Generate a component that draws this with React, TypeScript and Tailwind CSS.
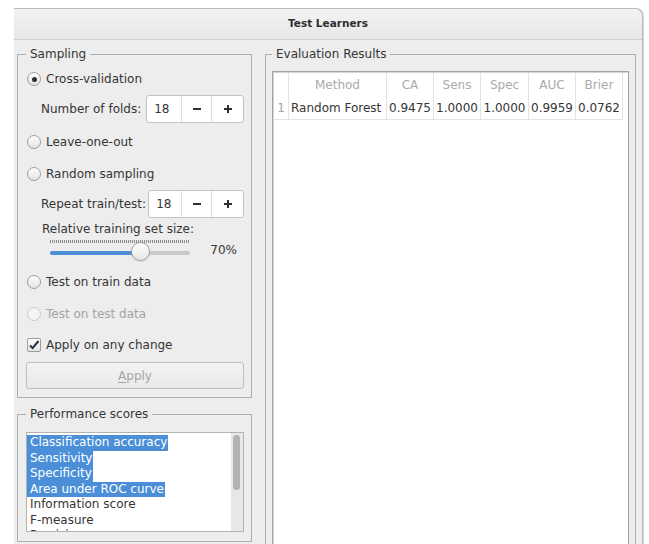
import type { ReactNode } from 'react'

// Orange-style "Test Learners" widget: sampling options on the left, results table on the right.

const SCORES: [string, boolean][] = [
  ['Classification accuracy', true],
  ['Sensitivity', true],
  ['Specificity', true],
  ['Area under ROC curve', true],
  ['Information score', false],
  ['F-measure', false],
  ['Precision', false],
]

const HEADERS = ['', 'Method', 'CA', 'Sens', 'Spec', 'AUC', 'Brier']
const ROW = ['1', 'Random Forest', '0.9475', '1.0000', '1.0000', '0.9959', '0.0762']

function Radio({ checked, disabled }: { checked?: boolean; disabled?: boolean }) {
  return (
    <span
      className={`flex h-[14px] w-[14px] shrink-0 items-center justify-center rounded-full border ${
        disabled ? 'border-[#cacaca] bg-[#f4f4f4]' : 'border-[#9d9d9d] bg-gradient-to-b from-white to-[#e3e3e3]'
      }`}
    >
      {checked && <span className="h-[5px] w-[5px] rounded-full bg-[#2e2e2e]" />}
    </span>
  )
}

function RadioRow({ label, h, checked, disabled }: { label: string; h: string; checked?: boolean; disabled?: boolean }) {
  return (
    <div className={`flex ${h} items-center gap-[5px] pl-[1px] ${disabled ? 'text-[#a4a4a4]' : ''}`}>
      <Radio checked={checked} disabled={disabled} />
      <span>{label}</span>
    </div>
  )
}

function Spin({ value, gap }: { value: number; gap: string }) {
  return (
    <div className={`${gap} flex h-[28px] flex-1 overflow-hidden rounded-[3px] border border-[#c2c2c2] bg-white`}>
      <span className="flex flex-1 items-center pl-[7px]">{value}</span>
      <span className="flex w-[30px] items-center justify-center border-l border-[#dcdcdc]">
        <svg width="10" height="10" viewBox="0 0 10 10">
          <path d="M1 5h8" stroke="#2e2e2e" strokeWidth="2" />
        </svg>
      </span>
      <span className="flex w-[32px] items-center justify-center border-l border-[#dcdcdc]">
        <svg width="10" height="10" viewBox="0 0 10 10">
          <path d="M1 5h8M5 1v8" stroke="#2e2e2e" strokeWidth="2" />
        </svg>
      </span>
    </div>
  )
}

function Group({ title, className, children }: { title: string; className: string; children: ReactNode }) {
  return (
    <fieldset className={`border border-[#adadad] ${className}`}>
      <legend className="pl-[4px] pr-[4px] leading-[14px]">{title}</legend>
      {children}
    </fieldset>
  )
}

export default function App() {
  return (
    <div className="h-[544px] w-[649px] overflow-hidden bg-white pl-[14px] pt-[8px] font-['DejaVu_Sans',sans-serif] text-[12px] text-[#353535]">
      <div className="h-[560px] w-[629px] rounded-tr-[8px] border-r border-t border-[#b9b9b9] bg-[#ededed] shadow-[1px_0_0_#d8d8d8]">
        {/* title bar */}
        <div className="flex h-[31px] items-center justify-center rounded-tr-[8px] border-b border-[#cfcfcf] bg-gradient-to-b from-[#f3f3f3] to-[#e7e7e7] text-[10.5px] font-bold text-[#2e2e2e]">
          Test Learners
        </div>

        <div className="flex items-start pl-[3px] pr-[6px] pt-[7px]">
          {/* left column */}
          <div className="flex w-[235px] shrink-0 flex-col">
            <Group title="Sampling" className="pb-[8px] pl-[8px] pr-[7px] pt-[3px]">
              <RadioRow label="Cross-validation" h="h-[30px]" checked />
              <div className="flex h-[30px] items-center pl-[15px]">
                <span>Number of folds:</span>
                <Spin value={18} gap="ml-[5px]" />
              </div>
              <RadioRow label="Leave-one-out" h="h-[36px]" />
              <RadioRow label="Random sampling" h="h-[28px]" />
              <div className="flex h-[32px] items-center pl-[15px]">
                <span>Repeat train/test:</span>
                <Spin value={18} gap="ml-[2px]" />
              </div>
              <div className="flex h-[18px] items-center pl-[16px]">Relative training set size:</div>
              <div className="flex h-[26px] items-start">
                <div className="relative ml-[24px] flex h-full w-[140px] flex-col pt-[2px]">
                  <div className="h-[3px] w-full bg-[repeating-linear-gradient(90deg,#8c8c8c_0px,#8c8c8c_1px,transparent_1px,transparent_2px)]" />
                  <div className="mt-[8px] flex h-[4px] w-full overflow-hidden rounded-full bg-[#c9c9c9]">
                    <div className="h-full w-[91px] bg-[#4a8fd8]" />
                  </div>
                  <div className="absolute left-[81px] top-[4px] h-[19px] w-[19px] rounded-full border border-[#a3a3a3] bg-gradient-to-b from-white to-[#e6e6e6] shadow-[0_1px_1px_rgba(0,0,0,0.12)]" />
                </div>
                <div className="flex h-[24px] flex-1 items-center justify-end pr-[7px]">70%</div>
              </div>
              <RadioRow label="Test on train data" h="h-[36px]" />
              <RadioRow label="Test on test data" h="h-[28px]" disabled />
              <div className="flex h-[34px] items-center gap-[5px] pl-[1px]">
                <span className="flex h-[14px] w-[14px] shrink-0 items-center justify-center rounded-[2px] border border-[#9d9d9d] bg-gradient-to-b from-white to-[#e3e3e3]">
                  <svg width="12" height="12" viewBox="0 0 12 12">
                    <path d="M2 6.5l2.6 2.6L10.5 2" fill="none" stroke="#2e2e2e" strokeWidth="2" />
                  </svg>
                </span>
                <span>Apply on any change</span>
              </div>
              <div className="flex h-[27px] items-center justify-center rounded-[3px] border border-[#bebebe] bg-gradient-to-b from-[#f3f3f3] to-[#e9e9e9] text-[#a5a5a5]">
                <span>
                  <span className="underline underline-offset-2">A</span>pply
                </span>
              </div>
            </Group>

            <Group title="Performance scores" className="mt-[9px] pb-[9px] pl-[8px] pr-[7px] pt-[11px]">
              <div className="flex h-[100px] border border-[#b3b3b3] bg-white">
                <div className="flex-1 overflow-hidden pt-[2px] leading-[15.5px]">
                  {SCORES.map(([name, selected]) => (
                    <div key={name}>
                      <span className={`inline-block pl-[3px] pr-[1px] ${selected ? 'bg-[#4a8fd8] text-white' : ''}`}>{name}</span>
                    </div>
                  ))}
                </div>
                <div className="w-[12px] bg-[#e7e7e7] pl-[2px] pt-[2px]">
                  <div className="h-[55px] w-[7px] rounded-full bg-[#b3b3b3]" />
                </div>
              </div>
            </Group>
          </div>

          {/* right column */}
          <Group title="Evaluation Results" className="ml-[13px] h-[520px] w-[371px] shrink-0 pl-[6px] pr-[6px] pt-[10px]">
            <div className="h-[480px] border border-[#a2a2a2] bg-white shadow-[inset_1px_1px_0_#d6d6d6]">
              <div className="grid grid-cols-[16px_98px_47px_47px_48px_47px_47px] pt-[1px]">
                {HEADERS.map((h, i) => (
                  <div key={i} className="flex h-[24px] items-center justify-center border-r border-[#e3e3e3] text-[#aaaaaa]">
                    {h}
                  </div>
                ))}
                {ROW.map((v, i) => (
                  <div
                    key={i}
                    className={`flex h-[23px] items-center whitespace-nowrap border-b border-r border-[#e3e3e3] ${
                      i === 0 ? 'justify-end pr-[3px] text-[#a6a6a6]' : i === 1 ? 'pl-[2px]' : 'justify-center'
                    }`}
                  >
                    {v}
                  </div>
                ))}
              </div>
            </div>
          </Group>
        </div>
      </div>
    </div>
  )
}
